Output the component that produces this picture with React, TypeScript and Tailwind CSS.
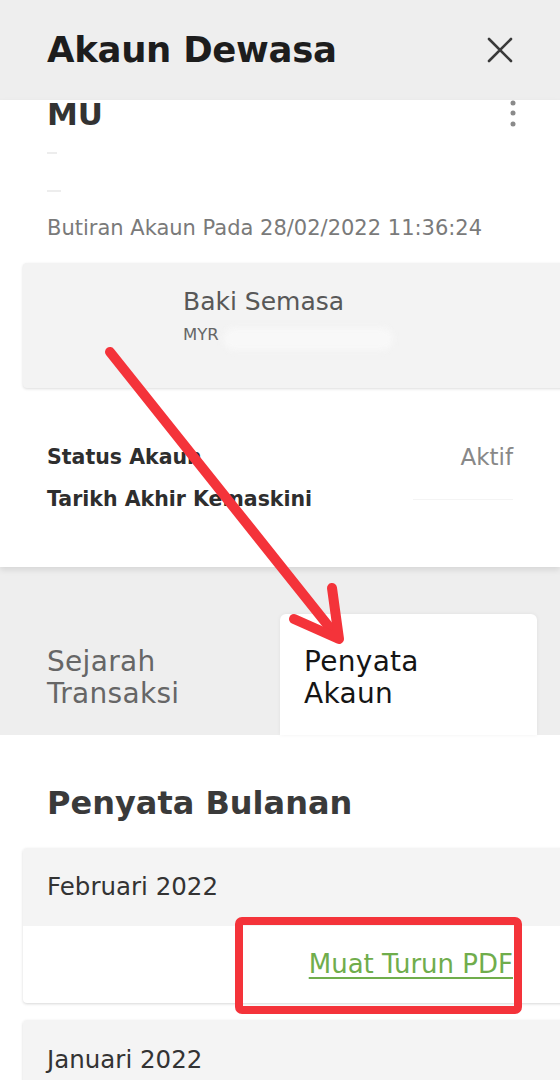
import React from 'react';

function Kebab() {
  return (
    <svg width="6" height="28" viewBox="0 0 6 28" className="shrink-0">
      <circle cx="3" cy="3" r="2.5" fill="#8a8a8a" />
      <circle cx="3" cy="13" r="2.5" fill="#8a8a8a" />
      <circle cx="3" cy="24" r="2.5" fill="#8a8a8a" />
    </svg>
  );
}

function CloseIcon() {
  return (
    <svg width="26" height="26" viewBox="0 0 26 26" className="shrink-0">
      <path d="M2 2 L24 24 M24 2 L2 24" stroke="#3a3a3a" strokeWidth="2.6" strokeLinecap="round" />
    </svg>
  );
}

// the red marks drawn over the screenshot
function Annotations() {
  return (
    <svg width="560" height="1080" viewBox="0 0 560 1080" className="absolute left-0 top-0 z-20 pointer-events-none">
      <g stroke="#f4333a" strokeWidth="10" strokeLinecap="round" strokeLinejoin="round" fill="none">
        <path d="M110 352 L338 638" />
        <path d="M294 619 L339 639 L332 588" />
      </g>
      <rect x="239" y="921" width="279" height="89" rx="3" stroke="#f4333a" strokeWidth="8" fill="none" />
    </svg>
  );
}

export default function App() {
  return (
    <div className="relative w-[560px] h-[1080px] overflow-hidden bg-white font-['DejaVu_Sans',sans-serif]">
      {/* header */}
      <div className="h-[100px] bg-[#eeeeee] flex items-center justify-between pl-[47px] pr-[47px]">
        <h1 className="text-[35.5px] font-bold text-[#1d1d1d] tracking-[-0.3px]">Akaun Dewasa</h1>
        <CloseIcon />
      </div>

      {/* account card */}
      <div className="relative z-10 bg-white shadow-[0_3px_6px_rgba(0,0,0,0.10)] pb-[54px]">
        <div className="h-[28px] flex items-center justify-between pl-[47px] pr-[44px]">
          <span className="text-[31px] font-bold text-[#333] leading-none">MU</span>
          <Kebab />
        </div>
        <div className="h-[88px] pl-[47px] flex flex-col justify-center gap-[36px]">
          <div className="w-[10px] h-[2px] bg-[#ededed]" />
          <div className="w-[14px] h-[2px] bg-[#ededed]" />
        </div>
        <p className="h-[24px] leading-[24px] pl-[47px] text-[21px] text-[#7a7a7a] whitespace-nowrap">Butiran Akaun Pada 28/02/2022 11:36:24</p>

        <div className="mt-[23px] ml-[23px] w-[545px] h-[125px] rounded-[4px] bg-[#f3f3f3] shadow-[0_1px_3px_rgba(0,0,0,0.14)] pl-[160px] pt-[25px]">
          <p className="h-[28px] leading-[28px] text-[25px] text-[#585858]">Baki Semasa</p>
          <div className="mt-[9px] h-[20px] flex items-center">
            <span className="text-[16.5px] text-[#666] leading-none">MYR</span>
            <span className="ml-[4px] mt-[8px] w-[170px] h-[22px] rounded-full bg-[#f8f8f8] blur-[3px]" />
          </div>
        </div>

        <div className="mt-[55px] px-[47px] flex flex-col gap-[14px]">
          <div className="h-[28px] flex items-center justify-between">
            <span className="text-[20.5px] font-bold text-[#2e2e2e]">Status Akaun</span>
            <span className="text-[23px] text-[#888]">Aktif</span>
          </div>
          <div className="h-[28px] flex items-center justify-between">
            <span className="text-[20.5px] font-bold text-[#2e2e2e]">Tarikh Akhir Kemaskini</span>
            <span className="w-[100px] h-[1px] bg-[#f4f4f4]" />
          </div>
        </div>
      </div>

      {/* tabs */}
      <div className="bg-[#eeeeee] pt-[47px] px-[23px] flex">
        <div className="flex-1 h-[121px] pl-[24px] pt-[32px]">
          <p className="text-[28px] leading-[32px] text-[#666] tracking-[0.3px]">Sejarah<br />Transaksi</p>
        </div>
        <div className="flex-1 h-[121px] pl-[24px] pt-[32px] bg-white rounded-t-[6px] shadow-[0_0_4px_rgba(0,0,0,0.06)]">
          <p className="text-[28px] leading-[32px] text-[#151515] tracking-[0.3px]">Penyata<br />Akaun</p>
        </div>
      </div>

      {/* statements */}
      <div className="pt-[48px]">
        <h2 className="pl-[47px] h-[40px] leading-[40px] text-[32px] font-bold text-[#3a3a3a]">Penyata Bulanan</h2>

        <div className="mt-[25px] ml-[23px] w-[545px] rounded-[4px] bg-white shadow-[0_1px_3px_rgba(0,0,0,0.16)] overflow-hidden">
          <div className="h-[78px] bg-[#f4f4f4] pl-[24px] flex items-center">
            <span className="text-[24.5px] text-[#333]">Februari 2022</span>
          </div>
          <div className="h-[77px] flex items-center justify-end pr-[55px]">
            <a className="text-[26px] text-[#70ad4c] underline underline-offset-[4px] decoration-[1.5px]">Muat Turun PDF</a>
          </div>
        </div>

        <div className="mt-[17px] ml-[23px] w-[545px] rounded-[4px] bg-white shadow-[0_1px_3px_rgba(0,0,0,0.16)] overflow-hidden">
          <div className="h-[78px] bg-[#f4f4f4] pl-[24px] pt-[2px] flex items-center">
            <span className="text-[24.5px] text-[#333]">Januari 2022</span>
          </div>
        </div>
      </div>

      <Annotations />
    </div>
  );
}
